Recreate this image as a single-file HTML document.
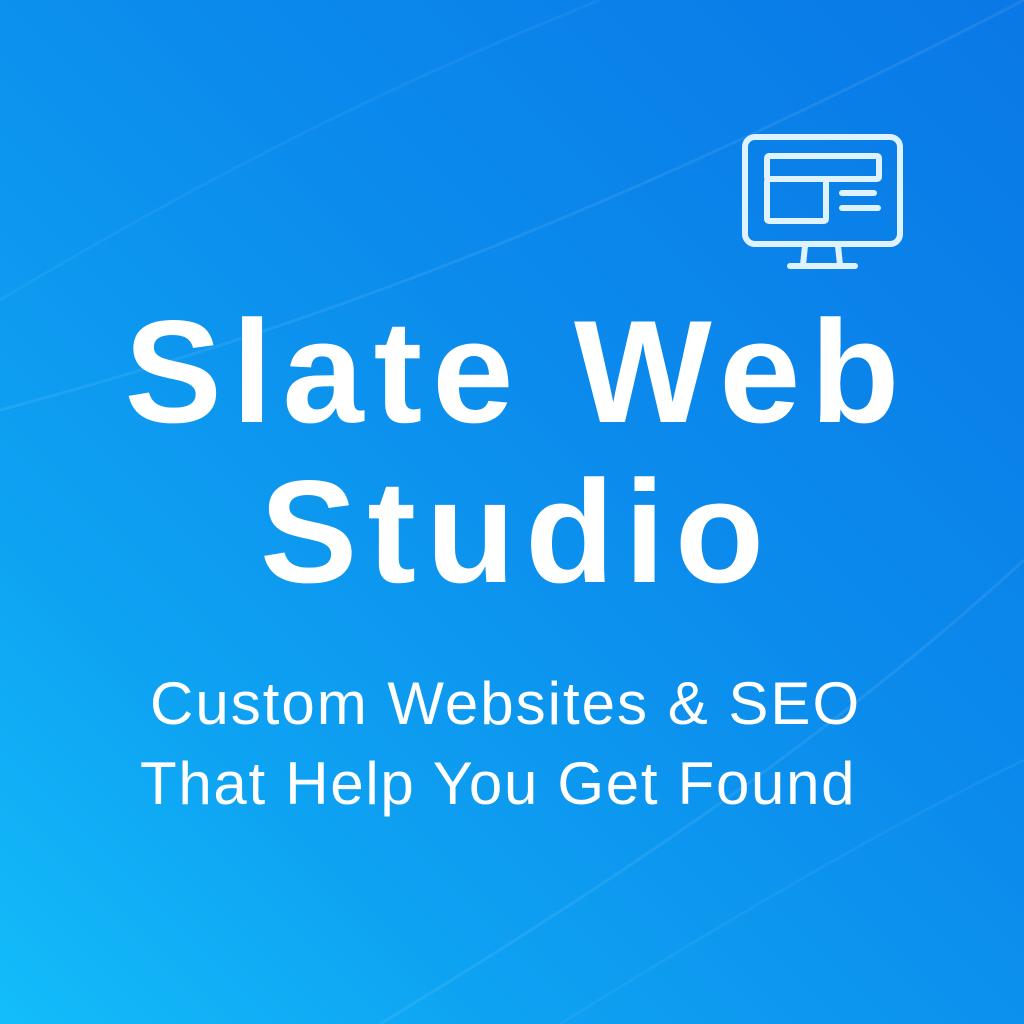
<!DOCTYPE html>
<html><head><style>
html,body{margin:0;padding:0}
body{width:1024px;height:1024px;overflow:hidden;position:relative;font-family:"Liberation Sans",sans-serif;
background:linear-gradient(225deg,#0a78e6 0%,#0b8aec 40%,#0ea2f2 75%,#13bdfa 100%);}
.t{position:absolute;left:0;width:1024px;text-align:center;color:#fff;white-space:nowrap}
h1{margin:0;font-weight:bold;font-size:146px;line-height:1;letter-spacing:10px}
.s{font-size:60px;line-height:1;letter-spacing:2px;text-align:left}
</style></head><body>
<svg width="1024" height="1024" style="position:absolute;left:0;top:0">
<path d="M0 410 C300 330 600 220 1024 0" stroke="rgba(255,255,255,0.08)" stroke-width="3" fill="none"/>
<path d="M0 300 C250 150 450 60 600 0" stroke="rgba(255,255,255,0.05)" stroke-width="3" fill="none"/>
<path d="M380 1024 C650 860 850 720 1024 560" stroke="rgba(255,255,255,0.08)" stroke-width="3" fill="none"/>
<path d="M560 1024 C760 900 900 820 1024 760" stroke="rgba(255,255,255,0.05)" stroke-width="3" fill="none"/>
<g stroke="#dff2ff" stroke-width="6" fill="none" stroke-linecap="round" stroke-linejoin="round">
<rect x="745" y="137" width="155" height="107" rx="10"/>
<rect x="767" y="156" width="112" height="23" rx="2"/>
<rect x="767" y="179" width="59" height="42" rx="2"/>
<line x1="842" y1="193" x2="874" y2="193"/>
<line x1="842" y1="208" x2="878" y2="208"/>
<line x1="805" y1="246" x2="803" y2="265"/>
<line x1="838" y1="246" x2="840" y2="265"/>
<line x1="790" y1="266" x2="855" y2="266"/>
</g>
</svg>
<div class="t" style="top:299px;left:5px"><h1>Slate Web</h1></div>
<div class="t" style="top:459px;left:5px"><h1>Studio</h1></div>
<div class="t s" style="top:674px;left:150px">Custom Websites &amp; SEO</div>
<div class="t s" style="top:754px;left:140px;letter-spacing:1.7px">That Help You Get Found</div>
</body></html>
